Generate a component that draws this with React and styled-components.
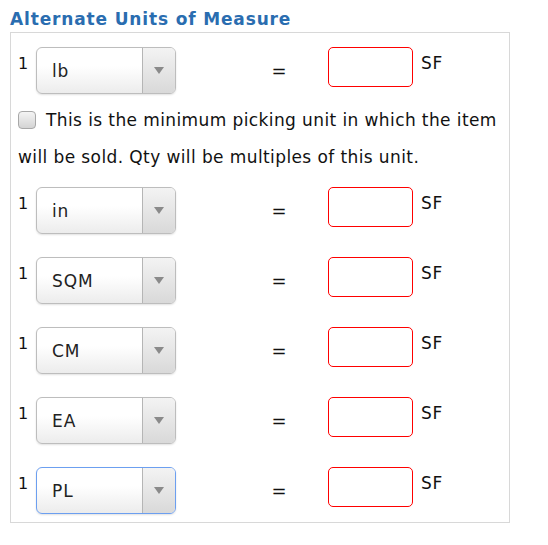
import React from "react";
import styled, { createGlobalStyle } from "styled-components";

const GlobalStyle = createGlobalStyle`
  body {
    margin: 0;
    background: #fff;
    font-family: "DejaVu Sans", Verdana, sans-serif;
    letter-spacing: 0.4px;
    color: #111;
  }
`;

const units = ["in", "SQM", "CM", "EA", "PL"];

const App = () => {
  return (
    <Page>
      <GlobalStyle />
      <Title>Alternate Units of Measure</Title>
      <Panel>
        <UnitRow unit="lb" />
        <CheckBlock>
          <Check type="checkbox" />
          This is the minimum picking unit in which the item will be sold. Qty will be multiples of this unit.
        </CheckBlock>
        {units.map((u, i) => (
          <UnitRow key={u} unit={u} top={i === 0 ? 11 : 23} focused={u === "PL"} />
        ))}
      </Panel>
    </Page>
  );
};

const UnitRow = ({ unit, top = 0, focused }) => (
  <Row $top={top}>
    <Qty>1</Qty>
    <Select $focused={focused}>
      <SelectText>{unit}</SelectText>
      <Arrow>
        <svg width="10" height="7" viewBox="0 0 10 7">
          <path d="M0 0H10L5 7Z" fill="#8a8a8a" />
        </svg>
      </Arrow>
    </Select>
    <Equals>=</Equals>
    <ValueInput />
    <UnitLabel>SF</UnitLabel>
  </Row>
);

const Page = styled.div`
  padding: 8px 10px 5px;
  width: 500px;
`;

const Title = styled.h2`
  margin: 0;
  font-size: 17px;
  line-height: 22px;
  font-weight: bold;
  letter-spacing: 0.85px;
  color: #2a6db0;
`;

const Panel = styled.div`
  margin-top: 2px;
  border: 1px solid #d8d8d8;
  padding: 14px 7px 8px;
`;

const Row = styled.div`
  display: flex;
  align-items: flex-start;
  margin-top: ${(p) => p.$top}px;
`;

const Qty = styled.span`
  width: 18px;
  font-size: 16px;
  line-height: 20px;
  margin-top: 7px;
`;

const Select = styled.div`
  width: 138px;
  height: 45px;
  display: flex;
  border: 1px solid ${(p) => (p.$focused ? "#6c9ff0" : "#bdbdbd")};
  border-radius: 6px;
  background: linear-gradient(#ffffff 40%, #ececec);
  box-shadow: 0 1px 2px rgba(0, 0, 0, 0.12);
  overflow: hidden;
`;

const SelectText = styled.span`
  flex: 1;
  padding-left: 15px;
  font-size: 17px;
  letter-spacing: 0.9px;
  line-height: 47px;
  color: #222;
`;

const Arrow = styled.span`
  width: 32px;
  display: flex;
  align-items: center;
  justify-content: center;
  border-left: 1px solid #b5b5b5;
  background: linear-gradient(#f3f3f3, #d9d9d9);
`;

const Equals = styled.span`
  width: 152px;
  align-self: center;
  text-align: right;
  padding-right: 41px;
  box-sizing: border-box;
  font-size: 18px;
`;

const ValueInput = styled.input`
  width: 85px;
  height: 40px;
  box-sizing: border-box;
  border: 1px solid #f00;
  border-radius: 5px;
  outline: none;
`;

const UnitLabel = styled.span`
  margin-left: 8px;
  font-size: 17px;
  letter-spacing: 0.7px;
  line-height: 20px;
  margin-top: 6px;
`;

const CheckBlock = styled.label`
  display: block;
  padding-top: 8px;
  font-size: 17px;
  line-height: 37px;
`;

const Check = styled.input`
  appearance: none;
  width: 18px;
  height: 18px;
  margin: 0 10px 0 0;
  vertical-align: -3px;
  border: 1px solid #a8a8a8;
  border-radius: 4px;
  background: linear-gradient(#f4f4f4, #d4d4d4);
`;

export default App;
